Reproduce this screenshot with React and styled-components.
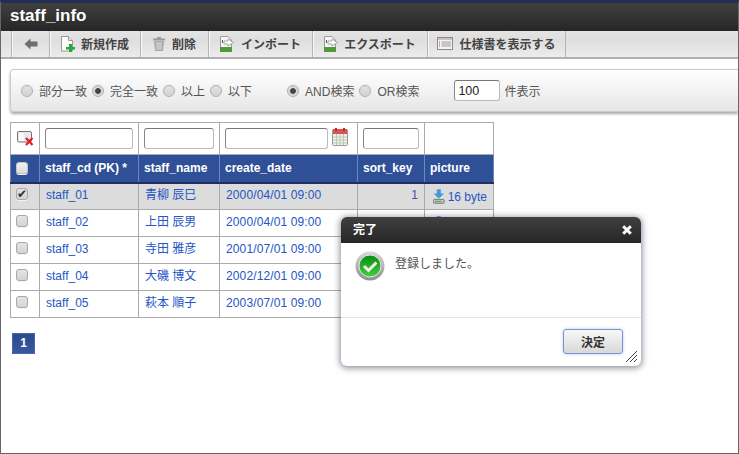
import React from 'react'
import styled, { createGlobalStyle } from 'styled-components'

const GlobalStyle = createGlobalStyle`
html, body {
  margin: 0;
  padding: 0;
  background: #fff;
}
* { box-sizing: border-box; }
`
const FONT = `"Liberation Sans", "Noto Sans CJK JP", sans-serif`

const Page = styled.div`
position: relative;
width: 739px;
height: 454px;
overflow: hidden;
background: #fff;
font-family: ${FONT};
font-size: 12px;
color: #333;
border-left: 1px solid #666;
border-right: 1px solid #666;
border-bottom: 1px solid #666;
border-top: 3px solid #232f55;
`
const TitleBar = styled.div`
height: 28px;
padding: 1px 0 0 9px;
background: linear-gradient(#404040, #262626);
color: #fff;
font-size: 17px;
font-weight: bold;
line-height: 24px;
`
const Toolbar = styled.div`
display: flex;
height: 28px;
padding-left: 10px;
background: linear-gradient(#e4e4e4, #dedede 35%, #ececec);
border-bottom: 2px solid #b0b0b0;
`
const ToolItem = styled.div`
display: flex;
align-items: center;
justify-content: center;
gap: ${p => p.$gap}px;
width: ${p => p.$w}px;
height: 26px;
padding-bottom: 1px;
border-left: 1px solid #b4b4b4;
border-right: ${p => (p.$last ? '1px solid #b4b4b4' : 'none')};
box-shadow: inset 1px 0 0 #f8f8f8;
font-size: 12px;
font-weight: bold;
color: #444;
white-space: nowrap;
`
const SearchPanel = styled.div`
display: flex;
align-items: center;
height: 43px;
margin: 10px 0 0 9px;
padding-left: 10px;
border: 1px solid #ccc;
border-right: none;
border-radius: 4px 0 0 4px;
background: linear-gradient(#fff, #e6e6e6);
box-shadow: 0 2px 3px rgba(0, 0, 0, 0.35);
color: #555;
`
const Radio = styled.input.attrs({ type: 'radio' })`
appearance: none;
flex: none;
width: 12px;
height: 12px;
margin: 0 6px 0 ${p => p.$gap || 0}px;
border: 1px solid #b0b0b0;
border-radius: 50%;
background: ${p =>
    p.checked
      ? 'radial-gradient(circle, #444 0 2.5px, #d8d8d8 3.2px)'
      : 'linear-gradient(#e2e2e2, #d2d2d2)'};
box-shadow: 0 0 0 1px #eee;
`
const RadioLabel = styled.span`
margin-right: ${p => p.$gap ?? 5}px;
white-space: nowrap;
`
const CountInput = styled.input`
width: 46px;
height: 21px;
margin: 0 4px 0 35px;
padding: 0 3px;
border: 1px solid #bbb;
border-top-color: #777;
border-left-color: #888;
border-radius: 3px;
background: #fff;
font-family: ${FONT};
font-size: 12.5px;
color: #222;
`
const GridWrap = styled.div`
margin: 10px 0 0 9px;
width: 484px;
`
const Grid = styled.table`
border-collapse: collapse;
table-layout: fixed;
width: 483px;
`
const FilterCell = styled.td`
height: 32px;
padding: 0 5px;
border: 1px solid #aaa;
vertical-align: middle;
white-space: nowrap;
`
const FilterRow = styled.div`
display: flex;
align-items: center;
gap: 4px;
`
const FilterInput = styled.input`
display: block;
flex: none;
width: ${p => p.$w}px;
height: 21px;
padding: 0;
border: 1px solid #bbb;
border-top-color: #777;
border-left-color: #888;
border-radius: 3px;
background: #fff;
`
const HeadCell = styled.th`
height: 28px;
padding: 0 5px 1px;
background: #2f5097;
border-left: 1px solid #6c88c0;
border-right: 1px solid #6c88c0;
border-top: 1px solid #2f5097;
border-bottom: 2px solid #1f2f66;
color: #fff;
font-size: 12px;
font-weight: bold;
text-align: left;
white-space: nowrap;
`
const Cell = styled.td`
height: 27px;
padding: 0 6px ${p => (p.$cjk ? 5 : 2)}px;
border: 1px solid #aaa;
background: ${p => (p.$on ? '#dcdcdc' : '#fff')};
color: ${p => (p.$muted ? '#3a50b0' : '#2456c4')};
font-size: 12px;
letter-spacing: ${p => (p.$wide ? '0.12px' : '0')};
text-align: ${p => p.$align || 'left'};
white-space: nowrap;
overflow: hidden;
`
const CheckCell = styled(Cell)`
padding: 0 0 5px 5px;
`
const PictureLink = styled.div`
display: flex;
align-items: center;
gap: 3px;
padding: 3px 0 0 2px;
`
const Check = styled.span`
display: block;
width: 12px;
height: 12px;
border: 1px solid ${p => (p.$head ? '#c4c4c4' : '#a8a8a8')};
border-radius: 3px;
background: ${p =>
    p.$head ? 'linear-gradient(#f0f0f0, #dcdcdc)' : 'linear-gradient(#e4e4e4, #d4d4d4)'};
box-shadow: 0 1px 0 #f4f4f4;
color: #333;
font-size: 12px;
line-height: 10px;
text-align: center;
`
const Pager = styled.div`
display: flex;
margin: 15px 0 0 2px;
`
const PageNo = styled.div`
width: 23px;
height: 21px;
background: linear-gradient(#2a4a8e, #38599f);
border: 1px solid #4a67a8;
color: #fff;
font-size: 12px;
font-weight: bold;
line-height: 19px;
text-align: center;
`
const Dialog = styled.div`
position: absolute;
left: 340px;
top: 214px;
display: flex;
flex-direction: column;
width: 300px;
height: 149px;
border-radius: 6px;
background: #fff;
box-shadow: 0 1px 6px 1px rgba(40, 40, 70, 0.55);
overflow: hidden;
`
const DialogHead = styled.div`
display: flex;
align-items: center;
justify-content: space-between;
height: 26px;
padding: 0 9px 0 12px;
background: linear-gradient(#404040, #262626);
color: #fff;
font-size: 12px;
font-weight: bold;
`
const DialogTitle = styled.span`
padding-bottom: 4px;
`
const DialogBody = styled.div`
display: flex;
align-items: flex-start;
gap: 10px;
height: 75px;
padding: 8px 0 0 14px;
border-bottom: 1px solid #e4e4e4;
color: #555;
`
const Message = styled.div`
padding-top: 5px;
line-height: 16px;
`
const DialogFoot = styled.div`
position: relative;
flex: 1;
display: flex;
justify-content: flex-end;
padding: 11px 18px 0 0;
`
const OkButton = styled.button`
width: 60px;
height: 25px;
padding: 0;
border: 1px solid #7a92d8;
border-radius: 3px;
background: linear-gradient(#f8f8f8, #d8d8d8);
box-shadow: 0 0 3px rgba(110, 140, 230, 0.5);
color: #333;
font-family: ${FONT};
font-size: 12px;
font-weight: bold;
`
const Grip = styled.svg`
position: absolute;
right: 4px;
bottom: 4px;
`

const BackIcon = () => (
  <svg width="14" height="12" viewBox="0 0 14 12">
    <path d="M0.5 6 L6.5 0.5 V3.5 H13.5 V8.5 H6.5 V11.5 Z" fill="#6e6e6e" />
  </svg>
)
const NewIcon = () => (
  <svg width="14" height="16" viewBox="0 0 14 16">
    <path d="M0.5 0.5 H7.5 L11.5 4.5 V15 H0.5 Z" fill="#fbfbfb" stroke="#9a9a9a" />
    <path d="M7.5 0.5 V4.5 H11.5" fill="#e4e4e4" stroke="#9a9a9a" />
    <path d="M8 8 h3 v3 h3 v2.5 h-3 v2.5 h-3 v-2.5 h-3 v-2.5 h3 Z" fill="#2aa63c" />
  </svg>
)
const TrashIcon = () => (
  <svg width="12" height="14" viewBox="0 0 12 14">
    <rect x="0" y="1.5" width="12" height="2" fill="#9a9a9a" />
    <rect x="4" y="0" width="4" height="2" fill="#9a9a9a" />
    <path d="M1 4 H11 L10 14 H2 Z" fill="#a8a8a8" />
    <path d="M4 5 V13 M6 5 V13 M8 5 V13" stroke="#e0e0e0" />
  </svg>
)
const TransferIcon = ({ w = 14 }) => (
  <svg width={w} height="16" viewBox={`0 0 ${w} 16`}>
    <path d="M0.5 0.5 H8 L11.5 4 V15.5 H0.5 Z" fill="#f6f6f6" stroke="#9a9a9a" />
    <rect x="0" y="11" width="12" height="5" fill="#4f9a3a" />
    <path d="M4 5 H8 V3 L13.5 6.5 L8 10 V8 H4 Z" fill="#fff" stroke="#a8a8a8" />
    <rect x="2" y="4" width="1" height="3" fill="#555" />
  </svg>
)
const SpecIcon = () => (
  <svg width="16" height="13" viewBox="0 0 16 13">
    <rect x="0.5" y="0.5" width="15" height="12" fill="#f4f4f4" stroke="#8a8a8a" />
    <rect x="1" y="1" width="14" height="2" fill="#c4c4c4" />
    <path d="M2 5 H3 M2 7 H3 M2 9 H3" stroke="#c44" />
    <path d="M4.5 5 H14 M4.5 7 H14 M4.5 9 H14" stroke="#999" />
  </svg>
)
const ClearIcon = () => (
  <svg width="17" height="15" viewBox="0 0 17 15" style={{ display: 'block', margin: '0 0 0 1px' }}>
    <rect x="0.5" y="0.5" width="14" height="10.5" rx="1.5" fill="#e8e8e8" stroke="#777" />
    <rect x="2" y="2" width="5" height="8" fill="#fafafa" />
    <path d="M9 7 L15.5 14 M15.5 7 L9 14" stroke="#e02020" strokeWidth="2.2" />
  </svg>
)
const CalendarIcon = () => (
  <svg width="16" height="18" viewBox="0 0 16 18" style={{ marginTop: -3 }}>
    <rect x="0.5" y="1.5" width="15" height="16" rx="1" fill="#eef1ea" stroke="#999" />
    <rect x="1" y="1" width="14" height="5" fill="#d9534f" />
    <rect x="3" y="0" width="2" height="3" fill="#b03030" />
    <rect x="11" y="0" width="2" height="3" fill="#b03030" />
    <path d="M1 9 H15 M1 12 H15 M1 15 H15 M4.5 6 V17 M8 6 V17 M11.5 6 V17" stroke="#bcc8b4" />
  </svg>
)
const DownloadIcon = () => (
  <svg width="12" height="15" viewBox="0 0 12 15">
    <path d="M4 0 H8 V4.5 H11.5 L6 9.5 L0.5 4.5 H4 Z" fill="#3c9ae0" />
    <rect x="0.5" y="10.5" width="11" height="4" rx="1" fill="#c8c8c8" stroke="#777" />
    <rect x="2" y="12" width="7" height="1.2" fill="#6aa84f" />
  </svg>
)
const SuccessIcon = () => (
  <svg width="30" height="30" viewBox="0 0 30 30">
    <defs>
      <linearGradient id="ringGrad" x1="0" y1="0" x2="0" y2="1">
        <stop offset="0" stopColor="#d8d8d8" />
        <stop offset="1" stopColor="#909090" />
      </linearGradient>
      <linearGradient id="ballGrad" x1="0" y1="0" x2="0" y2="1">
        <stop offset="0" stopColor="#0c8a14" />
        <stop offset="1" stopColor="#3fd040" />
      </linearGradient>
    </defs>
    <circle cx="15" cy="15" r="14.5" fill="url(#ringGrad)" />
    <circle cx="15" cy="15" r="11" fill="url(#ballGrad)" stroke="#e6e6e6" />
    <path d="M9 15 L13.5 19.5 L21.5 11.5" fill="none" stroke="#f0f0e8" strokeWidth="3" />
  </svg>
)
const CloseIcon = () => (
  <svg width="10" height="10" viewBox="0 0 10 10">
    <path d="M1.2 1.2 L8.8 8.8 M8.8 1.2 L1.2 8.8" stroke="#fff" strokeWidth="3" />
  </svg>
)

const tools = [
  { w: 38, gap: 0, icon: <BackIcon /> },
  { w: 91, gap: 6, icon: <NewIcon />, label: '新規作成' },
  { w: 68, gap: 7, icon: <TrashIcon />, label: '削除' },
  { w: 104, gap: 7, icon: <TransferIcon />, label: 'インポート' },
  { w: 115, gap: 5, icon: <TransferIcon w={15} />, label: 'エクスポート' },
  { w: 139, gap: 6, icon: <SpecIcon />, label: '仕様書を表示する', last: true },
]

const rows = [
  ['staff_01', '青柳 辰巳', '2000/04/01 09:00', true],
  ['staff_02', '上田 辰男', '2000/04/01 09:00'],
  ['staff_03', '寺田 雅彦', '2001/07/01 09:00'],
  ['staff_04', '大磯 博文', '2002/12/01 09:00'],
  ['staff_05', '萩本 順子', '2003/07/01 09:00'],
]

export default function App() {
  return (
    <Page>
      <GlobalStyle />
      <TitleBar>staff_info</TitleBar>
      <Toolbar>
        {tools.map((t, i) => (
          <ToolItem key={i} $w={t.w} $gap={t.gap} $last={t.last}>
            {t.icon}
            {t.label}
          </ToolItem>
        ))}
      </Toolbar>
      <SearchPanel>
        <Radio readOnly />
        <RadioLabel>部分一致</RadioLabel>
        <Radio readOnly checked />
        <RadioLabel>完全一致</RadioLabel>
        <Radio readOnly />
        <RadioLabel>以上</RadioLabel>
        <Radio readOnly />
        <RadioLabel>以下</RadioLabel>
        <Radio readOnly checked $gap={30} />
        <RadioLabel>AND検索</RadioLabel>
        <Radio readOnly />
        <RadioLabel $gap={0}>OR検索</RadioLabel>
        <CountInput readOnly value="100" />
        <span>件表示</span>
      </SearchPanel>
      <GridWrap>
        <Grid>
          <colgroup>
            <col width="29" />
            <col width="99" />
            <col width="81" />
            <col width="138" />
            <col width="67" />
            <col width="69" />
          </colgroup>
          <tbody>
            <tr>
              <FilterCell>
                <ClearIcon />
              </FilterCell>
              <FilterCell>
                <FilterInput $w={88} />
              </FilterCell>
              <FilterCell>
                <FilterInput $w={70} />
              </FilterCell>
              <FilterCell>
                <FilterRow>
                  <FilterInput $w={103} />
                  <CalendarIcon />
                </FilterRow>
              </FilterCell>
              <FilterCell>
                <FilterInput $w={56} />
              </FilterCell>
              <FilterCell />
            </tr>
            <tr>
              <HeadCell>
                <Check $head />
              </HeadCell>
              <HeadCell>staff_cd (PK) *</HeadCell>
              <HeadCell>staff_name</HeadCell>
              <HeadCell>create_date</HeadCell>
              <HeadCell>sort_key</HeadCell>
              <HeadCell>picture</HeadCell>
            </tr>
            {rows.map(([cd, name, date, on]) => (
              <tr key={cd}>
                <CheckCell $on={on}>
                  <Check>{on ? '✔' : ''}</Check>
                </CheckCell>
                <Cell $on={on}>{cd}</Cell>
                <Cell $on={on} $cjk>
                  {name}
                </Cell>
                <Cell $on={on} $wide>
                  {date}
                </Cell>
                <Cell $on={on} $align="right" $muted>
                  1
                </Cell>
                <Cell $on={on}>
                  <PictureLink>
                    <DownloadIcon />
                    16 byte
                  </PictureLink>
                </Cell>
              </tr>
            ))}
          </tbody>
        </Grid>
        <Pager>
          <PageNo>1</PageNo>
        </Pager>
      </GridWrap>
      <Dialog>
        <DialogHead>
          <DialogTitle>完了</DialogTitle>
          <CloseIcon />
        </DialogHead>
        <DialogBody>
          <SuccessIcon />
          <Message>登録しました。</Message>
        </DialogBody>
        <DialogFoot>
          <OkButton>決定</OkButton>
          <Grip width="12" height="12" viewBox="0 0 12 12">
            <path d="M1 12 L12 1 M5 12 L12 5 M9 12 L12 9" stroke="#444" />
          </Grip>
        </DialogFoot>
      </Dialog>
    </Page>
  )
}
